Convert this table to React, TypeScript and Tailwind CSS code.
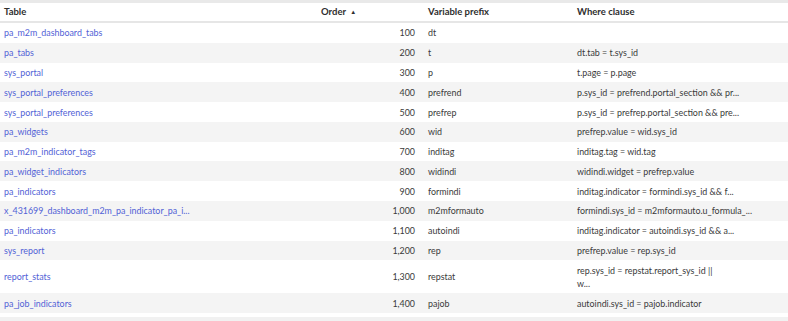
const ROWS: [string, string, string, string][] = [
  ["pa_m2m_dashboard_tabs", "100", "dt", ""],
  ["pa_tabs", "200", "t", "dt.tab = t.sys_id"],
  ["sys_portal", "300", "p", "t.page = p.page"],
  ["sys_portal_preferences", "400", "prefrend", "p.sys_id = prefrend.portal_section && pr..."],
  ["sys_portal_preferences", "500", "prefrep", "p.sys_id = prefrep.portal_section && pre..."],
  ["pa_widgets", "600", "wid", "prefrep.value = wid.sys_id"],
  ["pa_m2m_indicator_tags", "700", "inditag", "inditag.tag = wid.tag"],
  ["pa_widget_indicators", "800", "widindi", "widindi.widget = prefrep.value"],
  ["pa_indicators", "900", "formindi", "inditag.indicator = formindi.sys_id && f..."],
  ["x_431699_dashboard_m2m_pa_indicator_pa_i...", "1,000", "m2mformauto", "formindi.sys_id = m2mformauto.u_formula_..."],
  ["pa_indicators", "1,100", "autoindi", "inditag.indicator = autoindi.sys_id && a..."],
  ["sys_report", "1,200", "rep", "prefrep.value = rep.sys_id"],
  ["report_stats", "1,300", "repstat", "rep.sys_id = repstat.report_sys_id ||\nw..."],
  ["pa_job_indicators", "1,400", "pajob", "autoindi.sys_id = pajob.indicator"],
];

export default function App() {
  return (
    <div className="h-[321px] w-[788px] overflow-hidden bg-white font-['Lato','Liberation_Sans',sans-serif] text-[8.9px] text-[#3a3a3a]">
      <div className="h-[3px] bg-[#e9e9e9]" />
      <table className="w-full table-fixed border-collapse">
        <colgroup>
          <col className="w-[317px]" />
          <col className="w-[107px]" />
          <col className="w-[149px]" />
          <col className="w-[185px]" />
          <col />
        </colgroup>
        <thead>
          <tr className="h-[19px] border-b-2 border-[#e6e6e6] text-left text-[9.5px] text-[#2e2e2e]">
            <th className="pl-[4px] font-bold">Table</th>
            <th className="pl-[4px] font-bold">
              Order <span className="ml-[2px] align-[1px] text-[6px]">▲</span>
            </th>
            <th className="pl-[4px] font-bold">Variable prefix</th>
            <th className="pl-[4px] font-bold">Where clause</th>
            <th />
          </tr>
        </thead>
        <tbody>
          {ROWS.map(([table, order, prefix, where], i) => (
            <tr key={i} className={i % 2 === 1 ? "bg-[#f4f4f4]" : "bg-white"}>
              <td className="whitespace-nowrap py-[3.4px] pl-[4px] leading-[13px] text-[#5262d6]">{table}</td>
              <td className="py-[3.4px] pr-[9px] text-right leading-[13px]">{order}</td>
              <td className="py-[3.4px] pl-[4px] leading-[13px]">{prefix}</td>
              <td className="whitespace-pre-line py-[3.4px] pl-[4px] leading-[13px]">{where}</td>
              <td />
            </tr>
          ))}
        </tbody>
      </table>
      <div className="mt-[4px] h-[8px] bg-[#f1f1f1]" />
    </div>
  );
}
